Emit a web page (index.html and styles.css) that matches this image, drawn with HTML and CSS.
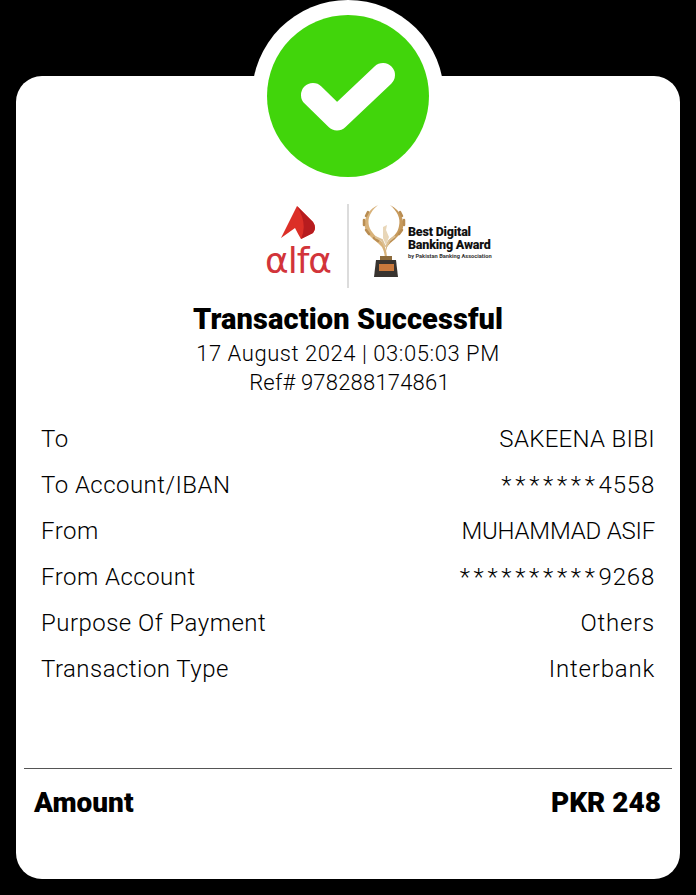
FILE: index.html
```html
<!DOCTYPE html>
<html lang="en">
<head>
<meta charset="utf-8">
<title>Transaction Successful</title>
<link rel="stylesheet" href="styles.css">
</head>
<body>
<main class="card">
  <div class="badge">
    <svg class="badge-icon" viewBox="0 0 162 162" aria-hidden="true">
      <circle cx="81" cy="81" r="81" fill="#41d50b"/>
      <path d="M46 80 L70 103.500 L116 60" fill="none" stroke="#fff" stroke-width="24" stroke-linecap="round" stroke-linejoin="round"/>
    </svg>
  </div>
  <div class="brand">
    <div class="alfa">
      <svg class="alfa-mark" viewBox="0 0 35 33" aria-hidden="true">
        <path d="M16 0 L32 16 Q36 22 32 27 L20 33 Q17 28 14 22 L0 32 Z" fill="#dc2f27"/>
        <path d="M16 0 L32 16 Q36 22 32 27 L20 33 Q27 18 16 0 Z" fill="#b71c1f"/>
      </svg>
      <span class="alfa-word">αlfα</span>
    </div>
    <div class="brand-rule"></div>
    <div class="award-block">
      <svg class="trophy" viewBox="0 0 44 72" aria-hidden="true">
        <path d="M16 0 C5 5 0 17 4 26 C8 33 15 36 20 42 C22 46 23 50 23 55 L25 55 C25 48 24 43 21 38 C15 32 9 28 7 21 C5 13 9 6 16 0 Z" fill="#d8b27a"/>
        <path d="M28 0 C39 5 44 17 40 26 C36 33 29 36 25 42 L24 46 C24 40 25 37 28 34 C33 30 36 27 37 21 C39 13 35 6 28 0 Z" fill="#c79a5c"/>
        <path d="M6 7 L4 11 M2 15 L2 20 M4 25 L7 29 M12 33 L16 36 M38 7 L40 11 M42 15 L42 20 M40 25 L37 29 M32 33 L28 36" fill="none" stroke="#b98d52" stroke-width="2.500" stroke-linecap="round"/>
        <path d="M21 22 L25 20 L24 25 L27 32 L24 40 L21 33 Z" fill="#e8d6b8"/>
        <path d="M13 32 L20 35 L23 42 M33 31 L27 36 L24 42" fill="none" stroke="#dcc196" stroke-width="2"/>
        <rect x="18" y="51" width="12" height="4" fill="#8d6b3c"/>
        <path d="M14 55 H34 L36 72 H12 Z" fill="#38332f"/>
        <rect x="17" y="59" width="15" height="7" fill="#c9793d"/>
      </svg>
      <div class="award">
        <span class="award-title">Best Digital</span>
        <span class="award-title">Banking Award</span>
        <span class="award-sub">by Pakistan Banking Association</span>
      </div>
    </div>
  </div>
  <h1 class="title">Transaction Successful</h1>
  <p class="meta meta-date">17 August 2024 | 03:05:03 PM</p>
  <p class="meta meta-ref">Ref# 978288174861</p>
  <dl class="rows">
    <div class="row"><dt>To</dt><dd class="caps">SAKEENA BIBI</dd></div>
    <div class="row"><dt>To Account/IBAN</dt><dd><span class="mask">*******</span>4558</dd></div>
    <div class="row"><dt>From</dt><dd class="caps caps-wide">MUHAMMAD ASIF</dd></div>
    <div class="row"><dt>From Account</dt><dd><span class="mask">**********</span>9268</dd></div>
    <div class="row"><dt>Purpose Of Payment</dt><dd>Others</dd></div>
    <div class="row"><dt>Transaction Type</dt><dd>Interbank</dd></div>
  </dl>
  <div class="total">
    <span>Amount</span>
    <span>PKR 248</span>
  </div>
</main>
</body>
</html>
```
FILE: styles.css
```css
* { box-sizing: border-box; }
html, body { margin: 0; height: 100%; }
body {
  background: #000;
  padding: 76px 16px 16px;
  overflow: hidden;
  font-family: "Roboto", "Liberation Sans", sans-serif;
  color: #000;
}
.card {
  position: relative;
  height: 803px;
  background: #fff;
  border-radius: 26px;
  padding-top: 128px;
  display: flex;
  flex-direction: column;
  align-items: center;
}
.badge {
  position: absolute;
  top: -76px;
  left: 236px;
  width: 192px;
  height: 192px;
  border-radius: 50%;
  background: #fff;
  display: flex;
  align-items: center;
  justify-content: center;
}
.badge-icon { width: 162px; height: 162px; display: block; }
.brand {
  display: grid;
  grid-template-columns: 1fr 2px 1fr;
  align-items: center;
  align-self: stretch;
  height: 84px;
}
.alfa {
  justify-self: end;
  width: 68px;
  margin-right: 15px;
  margin-bottom: 8px;
  display: flex;
  flex-direction: column;
  align-items: center;
}
.alfa-mark { width: 35px; height: 33px; display: block; margin-left: 1px; margin-bottom: 4px; }
.alfa-word {
  font-family: "DejaVu Sans", sans-serif;
  font-size: 36px;
  line-height: 35px;
  color: #d2343a;
  letter-spacing: -1px;
  white-space: nowrap;
}
.brand-rule { width: 2px; height: 84px; background: #dcdcdc; }
.award-block { display: flex; align-items: center; padding-left: 13px; }
.trophy { width: 44px; height: 72px; display: block; flex: none; margin-bottom: 10px; }
.award { display: flex; flex-direction: column; margin-left: 2px; margin-bottom: 8px; }
.award-title {
  font-weight: 900;
  font-size: 12.500px;
  line-height: 13.500px;
  letter-spacing: -0.2px;
  color: #111;
  white-space: nowrap;
}
.award-sub {
  font-size: 5.700px;
  line-height: 8px;
  font-weight: 700;
  color: #333;
  white-space: nowrap;
}
.title {
  margin: 13px 0 0;
  font-size: 29px;
  line-height: 36px;
  font-weight: 900;
  letter-spacing: 0.1px;
}
.meta {
  margin: 0;
  font-size: 22px;
  line-height: 29px;
  font-weight: 300;
  letter-spacing: 0.2px;
}
.meta-date { margin-top: 2px; letter-spacing: 0.55px; }
.meta-ref { padding-left: 3px; }
.rows {
  align-self: stretch;
  margin: 19px 25px 0;
  display: flex;
  flex-direction: column;
}
.row {
  height: 46px;
  display: flex;
  justify-content: space-between;
  align-items: center;
  font-size: 24px;
  font-weight: 300;
}
.row dt { margin: 0; letter-spacing: 0.47px; }
.row dd { margin: 0; letter-spacing: 0.8px; }
.row .caps { letter-spacing: 0.3px; }
.row .caps-wide { letter-spacing: -0.2px; }
.mask { letter-spacing: 3.700px; }
.total {
  position: absolute;
  left: 8px;
  right: 8px;
  top: 692px;
  border-top: 1px solid #555;
  padding: 17px 11px 0 10px;
  display: flex;
  justify-content: space-between;
  font-size: 28px;
  line-height: 34px;
  font-weight: 900;
}
```
